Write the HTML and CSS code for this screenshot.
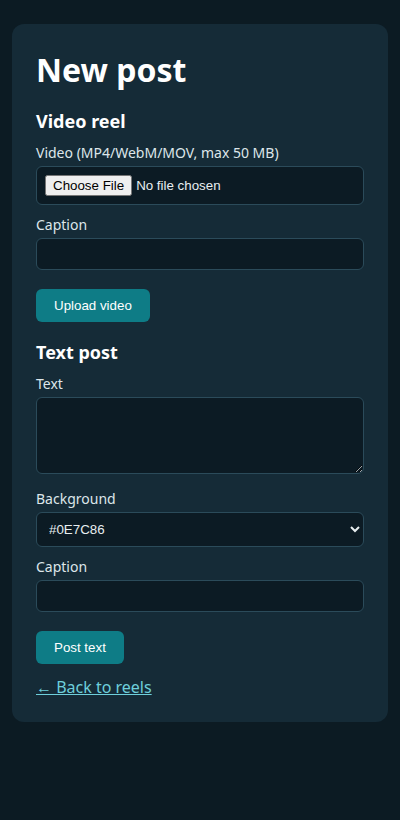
FILE: index.html
```html
<!DOCTYPE html>
<html lang="en">
<head>
<meta charset="utf-8">
<title>New post</title>
<link rel="stylesheet" href="styles.css">
</head>
<body>
<main class="card">
  <h1 class="title">New post</h1>

  <form class="form">
    <h2 class="section">Video reel</h2>
    <div class="field">
      <label class="label" for="video">Video (MP4/WebM/MOV, max 50 MB)</label>
      <input class="input file" id="video" type="file">
    </div>
    <div class="field">
      <label class="label" for="cap1">Caption</label>
      <input class="input text" id="cap1" type="text">
    </div>
    <button class="btn" type="button">Upload video</button>
  </form>

  <form class="form">
    <h2 class="section">Text post</h2>
    <div class="field">
      <label class="label" for="txt">Text</label>
      <textarea class="input area" id="txt"></textarea>
    </div>
    <div class="field">
      <label class="label" for="bg">Background</label>
      <select class="input select" id="bg">
        <option>#0E7C86</option>
      </select>
    </div>
    <div class="field">
      <label class="label" for="cap2">Caption</label>
      <input class="input text" id="cap2" type="text">
    </div>
    <button class="btn" type="button">Post text</button>
  </form>

  <a class="back" href="#">← Back to reels</a>
</main>
</body>
</html>
```

FILE: styles.css
```css
html, body {
  margin: 0;
  padding: 0;
  background: #0c1b23;
}
body {
  padding: 24px 12px;
  font-family: "Noto Sans", "Open Sans", sans-serif;
  color: #e6edf0;
}
.card {
  background: #152b37;
  border-radius: 12px;
  padding: 24px;
  display: flex;
  flex-direction: column;
}
.title {
  margin: 0;
  font-size: 32px;
  font-weight: 700;
  color: #ffffff;
}
.form {
  display: flex;
  flex-direction: column;
  align-items: flex-start;
}
.section {
  margin: 18px 0 10px;
  font-size: 18px;
  font-weight: 700;
  color: #ffffff;
}
.field {
  display: flex;
  flex-direction: column;
  align-self: stretch;
  margin-bottom: 10px;
}
.label {
  font-size: 14px;
  color: #dde6ea;
  margin-bottom: 4px;
}
.input {
  box-sizing: border-box;
  width: 100%;
  margin: 0;
  background: #0c1b24;
  border: 1px solid #2b4b5a;
  border-radius: 6px;
  color: #e8eef0;
  font-family: "Liberation Sans", Arial, sans-serif;
  font-size: 13.333px;
}
.file {
  height: 39px;
  padding: 8px;
}
.text {
  height: 32px;
  padding: 6px 8px;
}
.area {
  height: 77px;
  padding: 8px;
  resize: vertical;
  margin-bottom: 5px;
}
.select {
  height: 35px;
  padding: 0 8px;
}
.btn {
  margin-top: 9px;
  border: 0;
  border-radius: 6px;
  background: #0e7c86;
  color: #ffffff;
  font-family: "Liberation Sans", Arial, sans-serif;
  font-size: 13.333px;
  padding: 9px 18px;
  line-height: normal;
}
.back {
  margin-top: 12px;
  align-self: flex-start;
  font-size: 16px;
  color: #6ecfdb;
  text-decoration: underline;
}
```
